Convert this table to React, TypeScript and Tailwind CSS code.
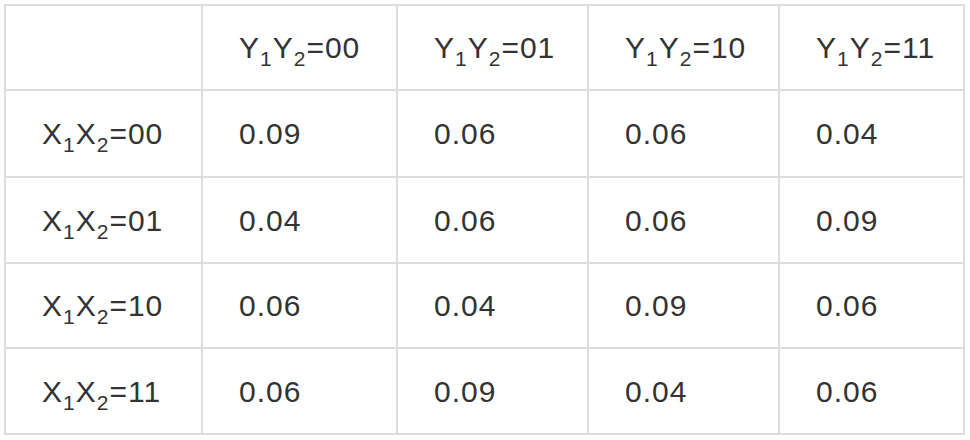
const cols = ["00", "01", "10", "11"];

const rows = [
  { x: "00", v: ["0.09", "0.06", "0.06", "0.04"] },
  { x: "01", v: ["0.04", "0.06", "0.06", "0.09"] },
  { x: "10", v: ["0.06", "0.04", "0.09", "0.06"] },
  { x: "11", v: ["0.06", "0.09", "0.04", "0.06"] },
];

const heights = ["h-[87px]", "h-[86px]", "h-[85px]", "h-[86px]"];

const Cell = ({ children, h }: { children?: React.ReactNode; h: string }) => (
  <div className={`${h} flex items-center pl-[36px] border-r-2 border-b-2 border-[#dddddd]`}>
    {children}
  </div>
);

const Label = ({ letter, value }: { letter: string; value: string }) => (
  <span>
    {letter}
    <sub className="text-[21px] bottom-[-8px]">1</sub>
    {letter}
    <sub className="text-[21px] bottom-[-8px]">2</sub>={value}
  </span>
);

const App = () => {
  return (
    <div className="w-[970px] h-[440px] bg-white pl-[4px] pt-[4px] font-['Liberation_Sans',Arial,sans-serif] text-[30px] tracking-[1px] text-[#333333]">
      <div className="grid grid-cols-[197px_195px_191px_191px_185px] w-fit border-l-2 border-t-2 border-[#dddddd]">
        <Cell h="h-[85px]" />
        {cols.map((c) => (
          <Cell key={c} h="h-[85px]">
            <Label letter="Y" value={c} />
          </Cell>
        ))}
        {rows.map((r, i) => (
          <>
            <Cell key={"l" + r.x} h={heights[i]}>
              <Label letter="X" value={r.x} />
            </Cell>
            {r.v.map((v, j) => (
              <Cell key={r.x + j} h={heights[i]}>
                {v}
              </Cell>
            ))}
          </>
        ))}
      </div>
    </div>
  );
};

export default App;
